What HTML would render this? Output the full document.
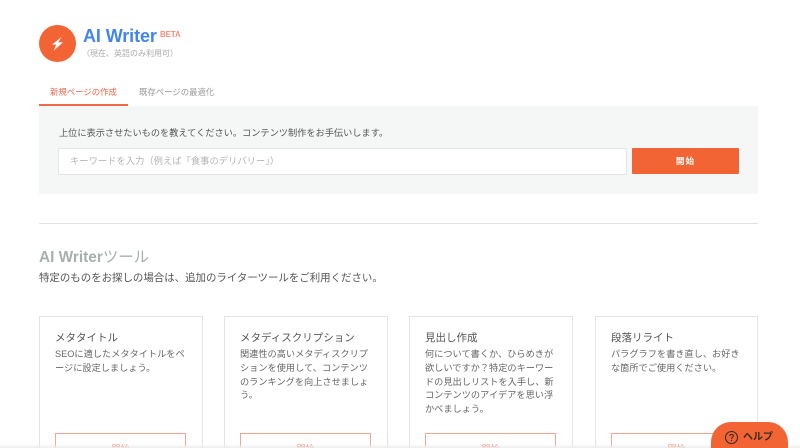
<!DOCTYPE html>
<html lang="ja">
<head>
<meta charset="utf-8">
<title>AI Writer</title>
<style>
html,body{margin:0;padding:0;background:#fff;width:800px;height:448px;overflow:hidden;}
body{position:relative;font-family:"Liberation Sans","Noto Sans CJK JP",sans-serif;color:#555;}
#w{position:absolute;left:0;top:0;width:800px;height:448px;overflow:hidden;filter:blur(.3px);}
.a{position:absolute;white-space:nowrap;line-height:1;}
.card{position:absolute;top:316px;width:162px;height:131px;border:1px solid #e2e4e6;border-bottom:0;background:#fff;overflow:hidden;}
.ct{position:absolute;left:15px;top:14px;font-size:10.5px;line-height:15px;color:#555;white-space:nowrap;}
.cd{position:absolute;left:15px;top:31px;font-size:9.2px;line-height:13.8px;color:#666;white-space:nowrap;}
.cb{position:absolute;left:15px;top:116px;width:129px;height:14px;border:1px solid #f5a594;border-bottom:0;text-align:center;font-size:9px;line-height:30px;color:#f0674a;overflow:hidden;}
</style>
</head>
<body>
<div id="w">
<svg class="a" style="left:39px;top:25px" width="37" height="37" viewBox="0 0 37 37">
<circle cx="18.5" cy="18.5" r="18.5" fill="#f26434"/>
<path d="M22.4 12L13 19.6H17.2L14.6 25.8L24 17.4H19.4Z" fill="#fff"/>
</svg>
<div class="a" style="left:83px;top:26px;font-size:18px;font-weight:bold;color:#4385f0;line-height:20px;letter-spacing:-.1px">AI Writer</div>
<div class="a" style="left:160px;top:30px;font-size:7.8px;font-weight:bold;color:#f58d78;line-height:9px">BETA</div>
<div class="a" style="left:82px;top:48px;font-size:8px;color:#aaa;line-height:11px">（現在、英語のみ利用可）</div>

<div class="a" style="left:50px;top:87px;font-size:8.4px;color:#f0674a;line-height:11px">新規ページの作成</div>
<div class="a" style="left:139px;top:87px;font-size:8.4px;color:#999;line-height:11px">既存ページの最適化</div>
<div class="a" style="left:39px;top:104px;width:89px;height:2px;background:#f26a45"></div>

<div class="a" style="left:39px;top:106px;width:719px;height:88px;background:#f5f6f6"></div>
<div class="a" style="left:59px;top:127px;font-size:9.2px;color:#555;line-height:12px">上位に表示させたいものを教えてください。コンテンツ制作をお手伝いします。</div>
<div class="a" style="left:58px;top:148px;width:567px;height:25px;background:#fff;border:1px solid #e2e4e6;border-radius:2px"></div>
<div class="a" style="left:70px;top:155px;font-size:9.3px;color:#b4b4b4;line-height:12px">キーワードを入力（例えば「食事のデリバリー」）</div>
<div class="a" style="left:632px;top:148px;width:107px;height:26px;background:#f26434;border-radius:1px;color:#fff;font-size:8.6px;font-weight:bold;text-align:center;line-height:26px;letter-spacing:1px">開始</div>

<div class="a" style="left:39px;top:223px;width:719px;height:1px;background:#e2e3e3"></div>

<div class="a" style="left:39px;top:249px;font-size:15.4px;color:#a8afae;line-height:18px"><b>AI Writer</b>ツール</div>
<div class="a" style="left:39px;top:272px;font-size:10.45px;color:#555;line-height:14px">特定のものをお探しの場合は、追加のライターツールをご利用ください。</div>

<div class="card" style="left:39px">
<div class="ct">メタタイトル</div>
<div class="cd">SEOに適したメタタイトルをペ<br>ージに設定しましょう。</div>
<div class="cb">開始</div>
</div>
<div class="card" style="left:224px">
<div class="ct">メタディスクリプション</div>
<div class="cd">関連性の高いメタディスクリプ<br>ションを使用して、コンテンツ<br>のランキングを向上させましょ<br>う。</div>
<div class="cb">開始</div>
</div>
<div class="card" style="left:409px">
<div class="ct">見出し作成</div>
<div class="cd">何について書くか、ひらめきが<br>欲しいですか？特定のキーワー<br>ドの見出しリストを入手し、新<br>コンテンツのアイデアを思い浮<br>かべましょう。</div>
<div class="cb">開始</div>
</div>
<div class="card" style="left:595px;width:161px">
<div class="ct">段落リライト</div>
<div class="cd">パラグラフを書き直し、お好き<br>な箇所でご使用ください。</div>
<div class="cb">開始</div>
</div>

<div class="a" style="left:0;top:444px;width:800px;height:4px;background:linear-gradient(#ffffff00,#eceded)"></div>

<div class="a" style="left:711px;top:422px;width:77px;height:26px;border-radius:20px 20px 0 0;background:#f26434"></div>
<svg class="a" style="left:724px;top:430px" width="15" height="15" viewBox="0 0 15 15">
<circle cx="7.5" cy="7.5" r="6" fill="none" stroke="#3a2a24" stroke-width="1.1"/>
<path d="M5.6 6C5.7 4.9 6.5 4.4 7.5 4.4C8.6 4.4 9.4 5 9.4 5.9C9.4 7.2 7.5 7.2 7.5 8.8" fill="none" stroke="#3a2a24" stroke-width="1.1"/>
<circle cx="7.5" cy="10.5" r=".7" fill="#3a2a24"/>
</svg>
<div class="a" style="left:743px;top:431px;font-size:10px;color:#3a2a24;line-height:13px;font-weight:bold">ヘルプ</div>
</div>
</body>
</html>
